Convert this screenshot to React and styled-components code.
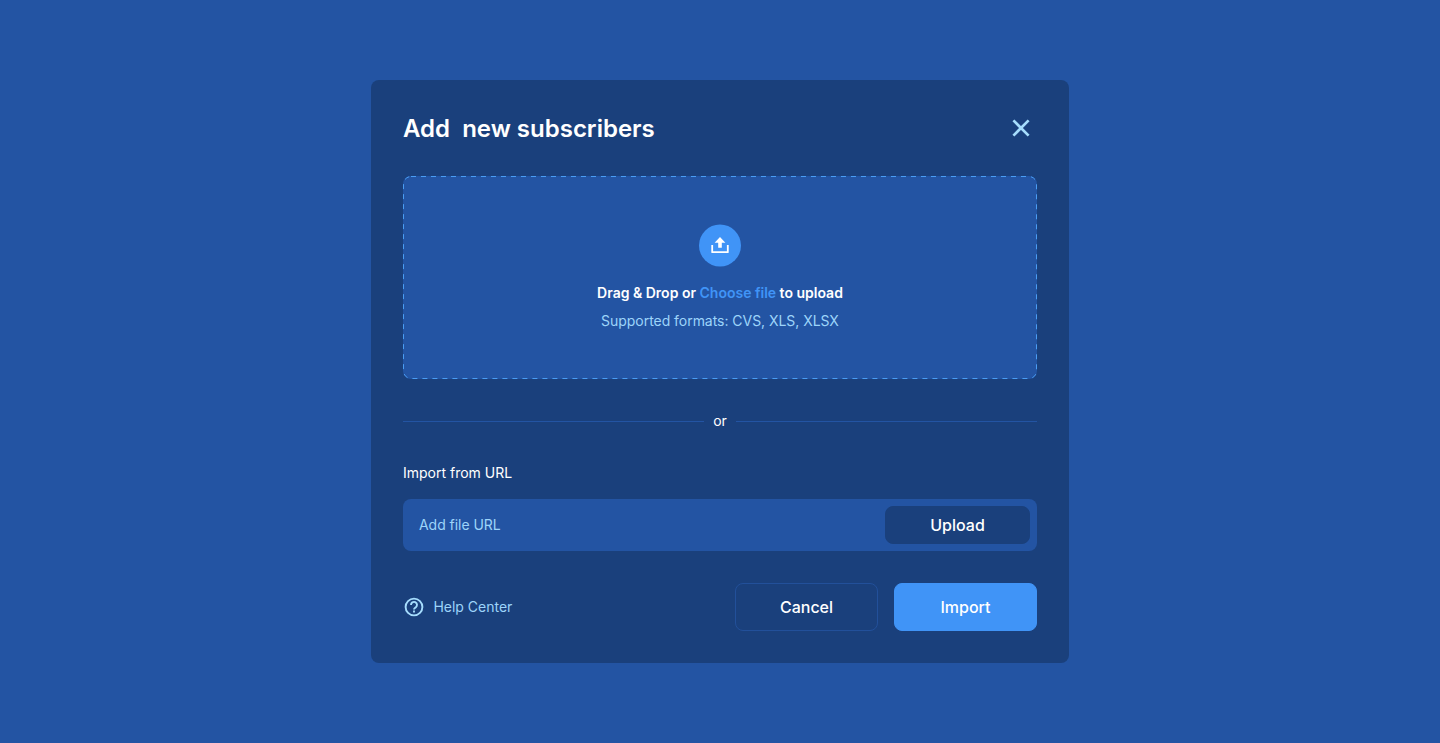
import React from "react";
import styled, { createGlobalStyle } from "styled-components";

const GlobalStyle = createGlobalStyle`
  *, *::before, *::after { box-sizing: border-box; }
  body {
    margin: 0;
    background: #2354a3;
    font-family: Inter, "Liberation Sans", sans-serif;
    color: #fff;
  }
`;

const Page = styled.main`
  min-height: 743px;
  display: flex;
  justify-content: center;
  align-items: flex-start;
  padding-top: 80px;
`;

const Dialog = styled.section`
  width: 698px;
  height: 583px;
  padding: 32px;
  border-radius: 8px;
  background: #1a407c;
  display: flex;
  flex-direction: column;
`;

const Header = styled.header`
  height: 32px;
  display: flex;
  align-items: center;
  justify-content: space-between;
  margin-bottom: 32px;
`;

const Title = styled.h1`
  margin: 0;
  padding-top: 2px;
  font-size: 24px;
  line-height: 32px;
  font-weight: 600;
  white-space: pre;
`;

const CloseButton = styled.button`
  width: 32px;
  height: 32px;
  padding: 0;
  border: 0;
  background: none;
  color: #a6ddfd;
  display: grid;
  place-items: center;
`;

const DropZone = styled.div`
  position: relative;
  height: 203px;
  border-radius: 8px;
  background: #2354a3;
  display: flex;
  flex-direction: column;
  align-items: center;
  padding-top: 48px;
`;

const DashedOutline = styled.svg`
  position: absolute;
  inset: 0;
  width: 100%;
  height: 100%;
  pointer-events: none;
`;

const UploadBadge = styled.svg`
  width: 42px;
  height: 43px;
  margin-bottom: 16px;
`;

const DropText = styled.p`
  margin: 0 0 8px;
  font-size: 14px;
  line-height: 20px;
  font-weight: 600;
`;

const ChooseLink = styled.span`
  color: #4094f7;
`;

const Formats = styled.p`
  margin: 0;
  font-size: 14px;
  line-height: 20px;
  letter-spacing: -0.04px;
  color: #9dd4fa;
`;

const Divider = styled.div`
  display: flex;
  align-items: center;
  gap: 9px;
  margin: 32px 0;
  font-size: 14px;
  line-height: 20px;

  &::before,
  &::after {
    content: "";
    flex: 1;
    height: 1px;
    background: #2354a3;
  }
`;

const Label = styled.label`
  font-size: 14px;
  line-height: 20px;
  margin-bottom: 16px;
`;

const UrlField = styled.div`
  height: 52px;
  border-radius: 8px;
  background: #2354a3;
  padding: 0 7px 0 16px;
  display: flex;
  align-items: center;
  justify-content: space-between;
  margin-bottom: 32px;
`;

const Placeholder = styled.span`
  font-size: 14px;
  line-height: 20px;
  letter-spacing: -0.04px;
  color: #9dd4fa;
`;

const Button = styled.button`
  width: ${(p) => p.$width || 143}px;
  height: ${(p) => p.$height || 48}px;
  padding: 0;
  border: 1px solid ${(p) => p.$border || p.$fill || "transparent"};
  border-radius: 8px;
  background: ${(p) => p.$fill || "transparent"};
  color: #fff;
  font-family: inherit;
  font-size: 16px;
  line-height: 24px;
  font-weight: 500;
`;

const Footer = styled.footer`
  display: flex;
  align-items: center;
  justify-content: space-between;
`;

const HelpLink = styled.div`
  display: flex;
  align-items: center;
  gap: 8.4px;
  font-size: 14px;
  line-height: 20px;
  color: #9dd4fa;
`;

const Actions = styled.div`
  display: flex;
  gap: 16px;
`;

const CloseIcon = () => (
  <svg width="32" height="32" viewBox="0 0 32 32" fill="none" stroke="currentColor" strokeWidth="2.7">
    <path d="M8.4 8.4 23.6 23.6M23.6 8.4 8.4 23.6" />
  </svg>
);

const UploadIcon = () => (
  <UploadBadge viewBox="0 0 42 43" fill="none">
    <circle cx="21" cy="21.5" r="21" fill="#4094f7" />
    <path d="M21 13 15.6 18.8H19.2V23.8H22.8V18.8H26.4Z" fill="#fff" />
    <path d="M13.2 21V28.2H28.8V21" stroke="#fff" strokeWidth="1.8" strokeLinejoin="round" />
  </UploadBadge>
);

const HelpIcon = () => (
  <svg width="22" height="22" viewBox="0 0 22 22" fill="none" stroke="#a6ddfd" strokeWidth="1.9">
    <circle cx="11" cy="11" r="8.4" />
    <path d="M8 9a3 3 0 1 1 4.9 2.2C11.8 12.1 11 12.4 11 13.4" />
    <path d="M11 14.4V16.4" />
  </svg>
);

export default function App() {
  return (
    <Page>
      <GlobalStyle />
      <Dialog>
        <Header>
          <Title>{"Add  new subscribers"}</Title>
          <CloseButton aria-label="Close"><CloseIcon /></CloseButton>
        </Header>
        <DropZone>
          <DashedOutline viewBox="0 0 634 203" fill="none">
            <rect x="0.5" y="0.5" width="633" height="202" rx="7.5" stroke="#4a9df4" strokeDasharray="5 5" />
          </DashedOutline>
          <UploadIcon />
          <DropText>
            Drag &amp; Drop or <ChooseLink>Choose file</ChooseLink> to upload
          </DropText>
          <Formats>Supported formats: CVS, XLS, XLSX</Formats>
        </DropZone>
        <Divider>or</Divider>
        <Label>Import from URL</Label>
        <UrlField>
          <Placeholder>Add file URL</Placeholder>
          <Button $width={145} $height={38} $fill="#1a407c">Upload</Button>
        </UrlField>
        <Footer>
          <HelpLink><HelpIcon />Help Center</HelpLink>
          <Actions>
            <Button $border="#22509a">Cancel</Button>
            <Button $fill="#4094f7">Import</Button>
          </Actions>
        </Footer>
      </Dialog>
    </Page>
  );
}
